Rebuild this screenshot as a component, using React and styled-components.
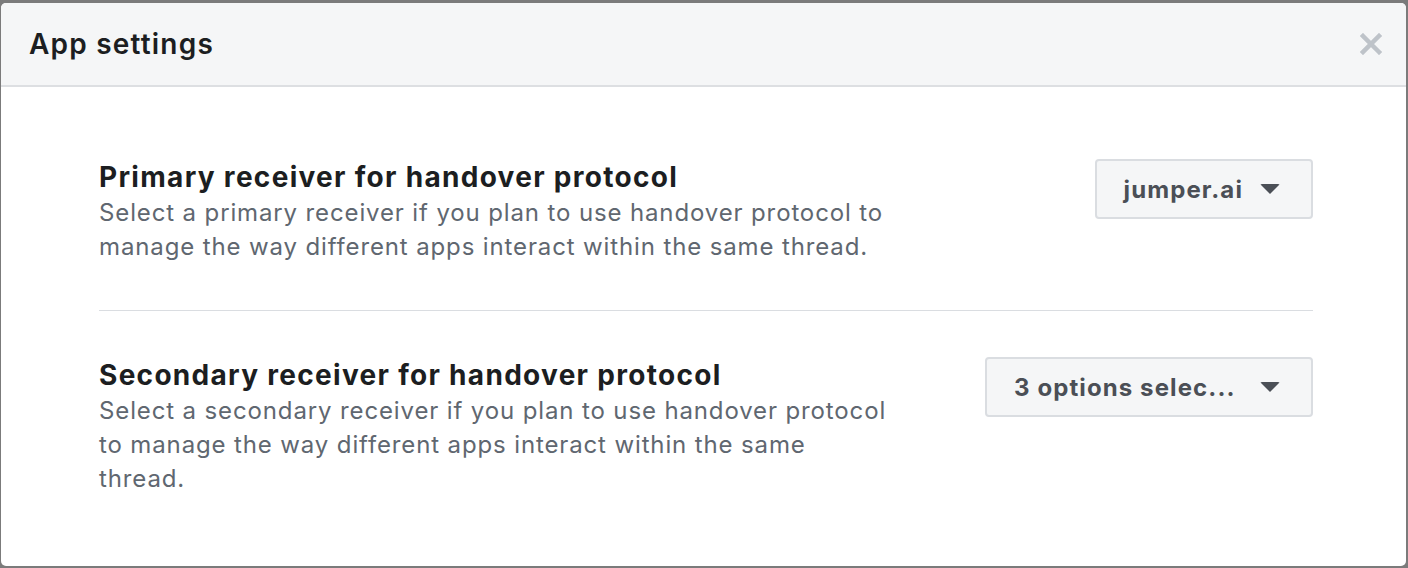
import styled, { createGlobalStyle } from "styled-components";

const GlobalStyle = createGlobalStyle`
  html, body {
    margin: 0;
    padding: 0;
    background: #7b7b7b;
  }
  body {
    font-family: "Inter", "Liberation Sans", sans-serif;
  }
`;

const settings = [
  {
    title: "Primary receiver for handover protocol",
    text: "Select a primary receiver if you plan to use handover protocol to manage the way different apps interact within the same thread.",
    value: "jumper.ai",
  },
  {
    title: "Secondary receiver for handover protocol",
    text: "Select a secondary receiver if you plan to use handover protocol to manage the way different apps interact within the same thread.",
    value: "3 options selec...",
    labelWidth: 229,
  },
];

export default function App() {
  return (
    <>
      <GlobalStyle />
      <Overlay>
        <Dialog>
          <Header>
            <h1>App settings</h1>
            <Close aria-label="Close">
              <svg width="22" height="22" viewBox="0 0 22 22">
                <path
                  d="M3 3 L19 19 M19 3 L3 19"
                  stroke="#bec3c9"
                  strokeWidth="4.5"
                  strokeLinecap="square"
                />
              </svg>
            </Close>
          </Header>
          <Body>
            {settings.map((s) => (
              <Row key={s.title}>
                <Info>
                  <h2>{s.title}</h2>
                  <p>{s.text}</p>
                </Info>
                <Select $labelWidth={s.labelWidth}>
                  <span>{s.value}</span>
                  <Caret />
                </Select>
              </Row>
            ))}
          </Body>
        </Dialog>
      </Overlay>
    </>
  );
}

const Overlay = styled.div`
  width: 1408px;
  height: 568px;
  box-sizing: border-box;
  padding: 3px 2px 2px 1px;
  overflow: hidden;
`;

const Dialog = styled.div`
  height: 563px;
  background: #ffffff;
  border-radius: 5px;
  overflow: hidden;
  display: flex;
  flex-direction: column;
`;

const Header = styled.div`
  height: 84px;
  flex-shrink: 0;
  box-sizing: border-box;
  background: #f5f6f7;
  border-bottom: 2px solid #dddfe2;
  display: flex;
  align-items: center;
  justify-content: space-between;
  padding: 0 24px 0 28px;

  h1 {
    margin: 0;
    font-size: 28px;
    font-weight: 600;
    color: #1c1e21;
    letter-spacing: 1.2px;
  }
`;

const Close = styled.button`
  border: none;
  background: none;
  padding: 0;
  width: 22px;
  height: 22px;
  display: flex;
  cursor: pointer;
`;

const Body = styled.div`
  padding: 73px 93px 0 98px;
  display: flex;
  flex-direction: column;
`;

const Row = styled.div`
  display: flex;
  justify-content: space-between;
  align-items: flex-start;
  padding: 0 0 46px;

  & + & {
    border-top: 1px solid #dadde1;
    padding-top: 47px;
  }
`;

const Info = styled.div`
  max-width: 795px;

  h2 {
    margin: 0;
    font-size: 28px;
    line-height: 34px;
    font-weight: 700;
    color: #1c1e21;
    letter-spacing: 1.3px;
  }

  p {
    margin: 2px 0 0;
    font-size: 24px;
    line-height: 34px;
    color: #606770;
    letter-spacing: 0.87px;
  }
`;

const Select = styled.div`
  flex-shrink: 0;
  margin-top: -1px;
  height: 60px;
  box-sizing: border-box;
  display: flex;
  align-items: center;
  padding: 0 31px 0 27px;
  background: #f5f6f7;
  border: 2px solid #dadde1;
  border-radius: 4px;
  color: #4b4f56;
  font-size: 24px;
  font-weight: 700;
  letter-spacing: 1.1px;

  span {
    width: ${(p) => (p.$labelWidth ? `${p.$labelWidth}px` : "auto")};
    margin-right: 17px;
    white-space: nowrap;
  }
`;

const Caret = styled.i`
  width: 0;
  height: 0;
  border-left: 10px solid transparent;
  border-right: 10px solid transparent;
  border-top: 10px solid #4b4f56;
  border-radius: 2px;
`;
